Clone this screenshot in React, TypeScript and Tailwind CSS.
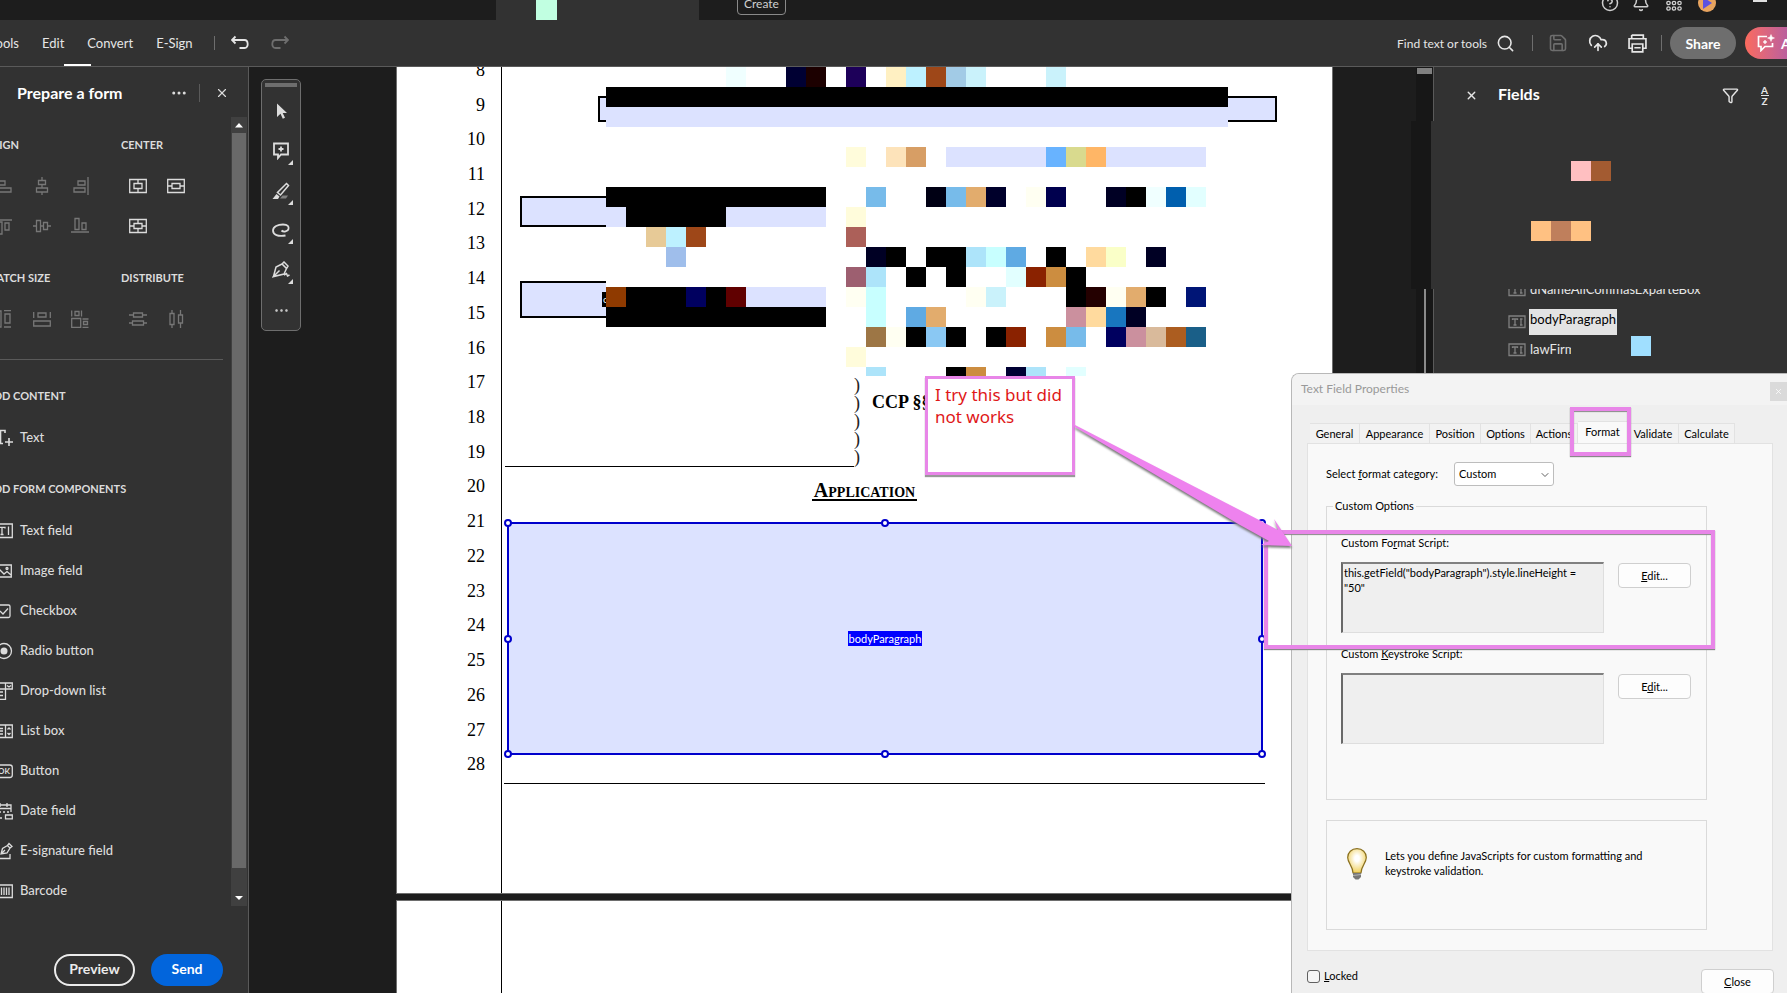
import React from 'react';
import { Bell, CircleHelp, CloudUpload, Save, Search, X, Ellipsis, ChevronDown, Funnel } from 'lucide-react';

type IconProps = {
  children: React.ReactNode;
  className?: string;
};

// 18px outline icon used all over the side panel
const Icon = ({ children, className = '' }: IconProps) => (
  <svg viewBox="0 0 18 18" className={`h-[18px] w-[18px] shrink-0 ${className}`} fill="none" stroke="currentColor" strokeWidth="1.3">
    {children}
  </svg>
);

const alignIcons = [
  { label: 'Align left', icon: <path d="M1 0v18M3 4h7v4H3zM3 11h13v4H3z" /> },
  { label: 'Align center', icon: <path d="M5.5 3.5h7v4h-7zM3.5 11h11v4h-11zM9 0v3.5M9 7.5V11M9 15v3" /> },
  { label: 'Align right', icon: <path d="M17 0v18M7 4h7v4H7zM3 11h11v4H3z" /> },
  { label: 'Align top', icon: <path d="M0 3h17M3 5h4v12H3zM10 6h4v7h-4z" /> },
  { label: 'Align middle', icon: <path d="M3.5 3.5h4v11h-4zM10.5 5.5h4v7h-4zM0 9h3.5M7.5 9h3M14.5 9H18" /> },
  { label: 'Align bottom', icon: <path d="M0 15h18M4 1.500h4v11H4zM11 6h4v6.500h-4z" /> },
];

const centerIcons = [
  { label: 'Center vertically', icon: <path d="M.7 2.500h16.600v13H.7zM5 6.500h8v5H5zM9 2.500v4M9 11.500v4" /> },
  { label: 'Center horizontally', icon: <path d="M.7 2.500h16.600v13H.7zM5 6.500h8v5H5zM.7 9H5M13 9h4.300" /> },
  { label: 'Center both', icon: <path d="M.7 2.500h16.600v13H.7zM5 6.500h8v5H5zM9 2.500v4M9 11.500v4M.7 9H5M13 9h4.300" /> },
];

const sizeIcons = [
  { label: 'Match height', icon: <path d="M1 1h5v16H1zM10 4h5v9h-5zM9 .6h7M9 17h7" /> },
  { label: 'Match width', icon: <path d="M.7 11h16.600v5H.7zM5 3h8v4H5zM.7 2v6M17.300 2v6" /> },
  { label: 'Match both', icon: <path d="M.7 8.500h9v9h-9zM12.500 11.500h4v3h-4zM11.500 9h6M11.500 17.300h6M4 1.500h4v4H4zM.7.500v6M10.500.500v6" /> },
];

const distributeIcons = [
  { label: 'Distribute vertically', icon: <path d="M4.500 3h9v4h-9zM3.500 11h11v4h-11zM0 5h4.500M13.500 5H18M0 13h3.500M14.500 13H18" /> },
  { label: 'Distribute horizontally', icon: <path d="M3 3.500h4v11H3zM11.500 5h4v8h-4zM5 0v3.500M5 14.500V18M13.500 0v5M13.500 13v5" /> },
];

const components = [
  { label: 'Text field', icon: <path d="M.7 2h16.600v13.500H.7zM4 6.500V5.300h6v1.200M7 5.300v7.200M5.500 12.500h3M13.500 4.500v8.500" /> },
  { label: 'Image field', icon: <><path d="M.7 3h15.600v12H.7zM1 12l4-4 4 4 3-2.500 4 3.500" /><circle cx="12" cy="6.500" r="1" /></> },
  { label: 'Checkbox', icon: <><rect x="2" y="3" width="13" height="12.500" rx="1.500" /><path d="M5 9l3 3 5-5.500" /></> },
  { label: 'Radio button', icon: <><circle cx="9" cy="9" r="7.500" /><circle cx="9" cy="9" r="3.500" fill="currentColor" stroke="none" /></> },
  { label: 'Drop-down list', icon: <path d="M.7 1h16.600v6H.7zM10.500 1v6M12 3.500l2 1.500 2-1.500M2 7v10.300h8.500V7M4 10h4M4 13.500h4" /> },
  { label: 'List box', icon: <path d="M.7 3h16.600v12.500H.7zM10.500 3v12.500M3 6.500h5M3 9h5M3 12h5M12.500 7.500L14 6l1.500 1.500M12.500 11l1.500 1.500 1.500-1.500" /> },
  { label: 'Button', icon: <><rect x=".7" y="3" width="16.600" height="12.500" rx="2.500" /><text x="3" y="12.200" fontSize="8" fill="currentColor" stroke="none" className="font-['Lato',sans-serif] font-bold">OK</text></> },
  { label: 'Date field', icon: <path d="M1 3h15v7M1 3v13h6M1 6.500h15M5 1v4M12 1v4M4 10h2M8 10h2M12 10h2M10.500 13h6.800v3.800h-6.800z" /> },
  { label: 'E-signature field', icon: <path d="M6 12l1.500-5.500 5-3 2.500 2.500-3 5L6 12zM12.500 3.500l1.500-2 3 3-2 1.500M6 12l4-4M1 11.500v5h14V12" /> },
  { label: 'Barcode', icon: <><path d="M.7 3h16.600v12.500H.7z" /><path d="M4 5.500v7.500M6.500 5.500v7.500M9 5.500v7.500M11.500 5.500v7.500M14 5.500v7.500" /></> },
];

// [x, width, colour] per 20px strip
type Strip = { y: number; cells: [number, number, string][] };

const strips: Strip[] = [
  { y: 67, cells: [[726, 20, '#f0ffff'], [786, 20, '#000033'], [806, 20, '#1c0000'], [846, 20, '#1d0059'], [886, 20, '#fff0c2'], [906, 20, '#bdf1ff'], [926, 20, '#9e4718'], [946, 20, '#a2cbe6'], [966, 20, '#caf2fb'], [1046, 20, '#caf2fb']] },
  { y: 87, cells: [[606, 622, '#000000']] },
  { y: 107, cells: [[606, 622, '#dce2ff']] },
  { y: 147, cells: [[846, 20, '#fffcdb'], [886, 20, '#fde3ba'], [906, 20, '#d79e65'], [946, 100, '#dce2ff'], [1046, 20, '#68b3ff'], [1066, 20, '#d9da8e'], [1086, 20, '#ffb666'], [1106, 100, '#dce2ff']] },
  { y: 187, cells: [[606, 220, '#000000'], [866, 20, '#77bbea'], [926, 20, '#000014'], [946, 20, '#77bbea'], [966, 20, '#e2ac6d'], [986, 20, '#00002b'], [1026, 20, '#fffff2'], [1046, 20, '#00004e'], [1106, 20, '#000024'], [1126, 20, '#000000'], [1146, 20, '#f0ffff'], [1166, 20, '#005fae'], [1186, 20, '#e2ffff']] },
  { y: 207, cells: [[606, 20, '#dce2ff'], [626, 100, '#000000'], [726, 100, '#dce2ff'], [846, 20, '#fffcdb']] },
  { y: 227, cells: [[646, 20, '#e7ca97'], [666, 20, '#bdf1ff'], [686, 20, '#9e4718'], [846, 20, '#ac6059']] },
  { y: 247, cells: [[666, 20, '#9fbeeb'], [866, 20, '#000024'], [886, 20, '#000000'], [926, 40, '#000000'], [966, 20, '#ade4fa'], [986, 20, '#c8ffff'], [1006, 20, '#5faae3'], [1046, 20, '#000000'], [1086, 20, '#ffda9e'], [1106, 20, '#faffc8'], [1146, 20, '#000024']] },
  { y: 267, cells: [[846, 20, '#9d5f70'], [866, 20, '#ade4fa'], [906, 20, '#000000'], [946, 20, '#000000'], [1006, 20, '#e2ffff'], [1026, 20, '#8a2200'], [1046, 20, '#cc8d40'], [1066, 20, '#000000']] },
  { y: 287, cells: [[606, 20, '#8f3a00'], [626, 60, '#000000'], [686, 20, '#00005f'], [706, 20, '#000000'], [726, 20, '#600000'], [746, 80, '#dce2ff'], [846, 20, '#fffff2'], [866, 20, '#c8ffff'], [966, 20, '#fffff2'], [986, 20, '#caf2fb'], [1066, 20, '#000000'], [1086, 20, '#240000'], [1106, 20, '#fffff2'], [1126, 20, '#e2ac6d'], [1146, 20, '#000000'], [1186, 20, '#001576']] },
  { y: 307, cells: [[606, 220, '#000000'], [866, 20, '#c8ffff'], [906, 20, '#5faae3'], [926, 20, '#e2ac6d'], [1066, 20, '#cb909e'], [1086, 20, '#ffda9e'], [1106, 20, '#1876bf'], [1126, 20, '#000024']] },
  { y: 327, cells: [[866, 20, '#9d7645'], [886, 20, '#fffff2'], [906, 20, '#000000'], [926, 20, '#8ac8f3'], [946, 20, '#000000'], [986, 20, '#000000'], [1006, 20, '#8a2200'], [1046, 20, '#cc8d40'], [1066, 20, '#77bbea'], [1106, 20, '#00005f'], [1126, 20, '#cb909e'], [1146, 20, '#d9ba9b'], [1166, 20, '#ac5d20'], [1186, 20, '#1a5f88']] },
  { y: 347, cells: [[846, 20, '#fffcdb']] },
  { y: 367, cells: [[866, 20, '#ade4fa'], [946, 20, '#000000'], [966, 20, '#cc8d40'], [1006, 20, '#000033'], [1026, 20, '#ade4fa'], [1066, 20, '#e2ffff']] },
];

const lineNumbers = Array.from({ length: 21 }, (_, i) => i + 8);

const handles = [
  '-left-[5px] -top-[5px]', 'left-[372px] -top-[5px]', '-right-[5px] -top-[5px]',
  '-left-[5px] top-[111px]', '-right-[5px] top-[111px]',
  '-left-[5px] -bottom-[5px]', 'left-[372px] -bottom-[5px]', '-right-[5px] -bottom-[5px]',
];

const TitleBar = () => (
  <header className="flex h-5 shrink-0 items-end overflow-hidden bg-[#1d1d1d] text-[#d0d0d0]">
    <div className="ml-[496px] flex h-5 w-[203px] bg-[#323232] pl-10">
      <span className="h-5 w-[21px] bg-[#c1ffe1]" />
    </div>
    <button className="mb-[5px] ml-[38px] h-7 rounded-[4px] border border-[#8a8a8a] px-[6px] pt-[5px] text-[12px] leading-5">Create</button>
    <div className="ml-auto flex items-end gap-4 pr-5">
      <CircleHelp size={18} strokeWidth={2} className="mb-[8px]" />
      <Bell size={18} strokeWidth={2} className="mb-[8px] ml-[-3px]" />
      <svg viewBox="0 0 16 16" className="mb-[9px] h-4 w-4" fill="none" stroke="currentColor" strokeWidth="1.300">
        {[2.5, 8, 13.5].map((y) => [2.5, 8, 13.5].map((x) => <circle key={`${x}-${y}`} cx={x} cy={y} r="1.700" />))}
      </svg>
      <svg viewBox="0 0 18 18" className="mb-[8px] h-[18px] w-[18px]">
        <circle cx="9" cy="9" r="9" fill="#e8a45f" />
        <path d="M5 3l9 6-9 6z" fill="#5b52e0" />
      </svg>
      <span className="mb-[18px] ml-[21px] h-[2px] w-[14px] bg-[#e0e0e0]" />
    </div>
  </header>
);

const Toolbar = () => (
  <div className="flex h-[47px] shrink-0 items-center border-b border-[#5a5a5a] bg-[#323232] text-[13px] text-[#e6e6e6]">
    <nav className="relative flex h-full w-[200px] items-center pt-[2px]">
      <button className="-ml-[13px] w-8 text-right">Tools</button>
      <button className="ml-[23px]">Edit</button>
      <button className="ml-[23px]">Convert</button>
      <button className="ml-[23px]">E-Sign</button>
      <span className="absolute bottom-0 left-16 h-[2px] w-[27px] bg-white" />
    </nav>
    <span className="ml-[14px] h-[14px] w-px bg-[#6e6e6e]" />
    <button aria-label="Undo" className="ml-4">
      <Icon><path d="M4.500 2.500L1 6l3.500 3.500M1 6h12.500c4 0 4.500 8 0 8H8.500" strokeWidth="1.800" /></Icon>
    </button>
    <button aria-label="Redo" className="ml-[22px] text-[#6e6e6e]">
      <Icon><path d="M13.500 2.500L17 6l-3.500 3.500M17 6H4.500c-4 0-4.500 8 0 8h5" strokeWidth="1.800" /></Icon>
    </button>
    <div className="ml-auto flex items-center">
      <span className="pt-px text-[12px]">Find text or tools</span>
      <button aria-label="Search" className="ml-[9px]"><Search size={19} strokeWidth={2} /></button>
      <span className="ml-[17px] h-4 w-px bg-[#6e6e6e]" />
      <button aria-label="Save" className="ml-[15px] text-[#6e6e6e]">
        <Save size={20} strokeWidth={1.900} />
      </button>
      <button aria-label="Upload" className="ml-5"><CloudUpload size={20} strokeWidth={2} /></button>
      <button aria-label="Print" className="ml-5">
        <Icon className="h-[19px] w-[19px]"><path d="M3.500 1h11v3M3.500 4V1M4 13.500H1V4.500h16v9h-3M4 9.500h10v7.500H4zM6 13h6" strokeWidth="1.600" /></Icon>
      </button>
      <span className="ml-[14px] h-4 w-px bg-[#6e6e6e]" />
      <button className="ml-2 h-8 w-[66px] rounded-full bg-[#6e6e6e] text-[14px] font-bold text-white">Share</button>
      <button className="ml-[9px] flex h-8 w-[42px] items-center overflow-hidden rounded-l-full bg-linear-to-r from-[#fb6a5c] to-[#bb5f9c] pl-3 text-[14px] font-bold text-white">
        <Icon className="h-5 w-5">
          <path d="M10 2.500H1.500v10H4v4l4-4h7.500V9" strokeWidth="1.700" />
          <path d="M14 .5l1 2.500 2.500 1L15 5l-1 2.500L13 5l-2.500-1L13 3zM8 6l.7 1.300L10 8l-1.300.7L8 10l-.7-1.300L6 8l1.300-.7z" fill="currentColor" strokeWidth=".5" />
        </Icon>
        <span className="ml-[6px]">A</span>
      </button>
    </div>
  </div>
);

const SectionTitle = ({ children, className = '' }: IconProps) => (
  <h3 className={`text-[11px] leading-4 font-bold whitespace-nowrap text-[#dcdcdc] ${className}`}>{children}</h3>
);

const FormPanel = () => (
  <aside className="flex w-[249px] shrink-0 flex-col overflow-hidden border-r border-[#5a5a5a] bg-[#323232] text-[#dcdcdc]">
    <div className="flex h-[50px] shrink-0 items-center pt-[2px] pl-[17px]">
      <h2 className="text-[16px] leading-5 font-bold text-white">Prepare a form</h2>
      <button aria-label="More" className="ml-auto"><Ellipsis size={18} /></button>
      <span className="ml-[11px] h-[18px] w-px bg-[#5a5a5a]" />
      <button aria-label="Close panel" className="mr-[19px] ml-[15px]"><X size={14} strokeWidth={2} /></button>
    </div>
    <div className="flex min-h-0">
      <div className="w-[231px] shrink-0 overflow-hidden pr-2">
        <div className="grid grid-cols-[121px_1fr] pt-5">
          <SectionTitle className="-ml-[14px]">ALIGN</SectionTitle>
          <SectionTitle>CENTER</SectionTitle>
          <div className="-ml-[5px] mt-6 grid w-[114px] grid-cols-3 gap-y-[22px] text-[#777777]">
            {alignIcons.map((item) => (
              <button key={item.label} aria-label={item.label}><Icon>{item.icon}</Icon></button>
            ))}
          </div>
          <div className="mt-6 ml-2 grid w-[76px] grid-cols-2 gap-y-[22px]">
            {centerIcons.map((item) => (
              <button key={item.label} aria-label={item.label}><Icon>{item.icon}</Icon></button>
            ))}
          </div>
          <SectionTitle className="mt-[35px] -ml-[14px]">MATCH SIZE</SectionTitle>
          <SectionTitle className="mt-[35px]">DISTRIBUTE</SectionTitle>
          <div className="-ml-[5px] mt-6 grid w-[114px] grid-cols-3 text-[#777777]">
            {sizeIcons.map((item) => (
              <button key={item.label} aria-label={item.label}><Icon>{item.icon}</Icon></button>
            ))}
          </div>
          <div className="mt-6 ml-2 grid w-[76px] grid-cols-2 text-[#777777]">
            {distributeIcons.map((item) => (
              <button key={item.label} aria-label={item.label}><Icon>{item.icon}</Icon></button>
            ))}
          </div>
        </div>
        <hr className="mt-[31px] border-[#5a5a5a]" />
        <SectionTitle className="mt-7 -ml-[14px]">ADD CONTENT</SectionTitle>
        <button className="-ml-[5px] mt-[14px] flex h-10 items-center gap-[7px] text-[13px] font-medium">
          <Icon><path d="M1 4V1.500h9V4M5.500 1.500v13M3 14.500h5M14 9v8M10 13h8" strokeWidth="1.600" /></Icon>
          Text
        </button>
        <SectionTitle className="mt-[23px] -ml-[14px]">ADD FORM COMPONENTS</SectionTitle>
        <ul className="-ml-[5px] mt-[14px]">
          {components.map((item) => (
            <li key={item.label}>
              <button className="flex h-10 items-center gap-[7px] text-[13px] font-medium">
                <Icon>{item.icon}</Icon>
                {item.label}
              </button>
            </li>
          ))}
        </ul>
      </div>
      <div className="flex h-[789px] w-4 shrink-0 flex-col items-center bg-[#404040]">
        <svg viewBox="0 0 16 16" className="h-4 w-4" fill="#ffffff"><path d="M4 10.500h8L8 6z" /></svg>
        <span className="h-[735px] w-[14px] bg-[#696969]" />
        <svg viewBox="0 0 16 16" className="mt-auto h-4 w-4" fill="#ffffff"><path d="M4 6h8l-4 4z" /></svg>
      </div>
    </div>
    <div className="mt-auto mb-[7px] flex shrink-0 justify-end gap-4 pr-[25px] text-[14px] leading-5 font-bold">
      <button className="h-8 w-[81px] rounded-full border-2 border-[#ebebeb] pb-[2px] text-[#ebebeb]">Preview</button>
      <button className="h-8 w-[72px] rounded-full bg-[#0265dc] pb-[2px] text-white">Send</button>
    </div>
  </aside>
);

const tools = [
  { label: 'Select', more: false, icon: <path d="M5 1.500v13.500l3.500-3.200 2.300 5 2.200-1-2.300-4.800H15z" fill="currentColor" stroke="none" /> },
  { label: 'Comment', more: true, icon: <path d="M2 1.500h14v11H9L6 16v-3.500H2zM9 4.500v5M6.500 7h5" /> },
  { label: 'Highlight', more: true, icon: <><path d="M14.500 1.500l2 2-8 9.500-3-2.500z" strokeWidth="1.500" /><path d="M4.500 12l3 2.500-1.500 2.500H.5z" fill="currentColor" stroke="none" /><path d="M8 16.500l2.500-3H16l-2 3z" fill="#808080" stroke="none" /></> },
  { label: 'Draw', more: true, icon: <path d="M13.500 14.500C6 16 1 13.500 1 9.500S6 3.500 11 3.500s6 2 5.500 4.500-5 3.500-7 1.500" /> },
  { label: 'Sign', more: true, icon: <path d="M1.500 15.500L4 6l6-3 4.500 4.500L12 13l-10.500 2.500 6-6M10 3l2-2 4 4-1.500 2.500M12 14l2.500-1.500 1 2.500 2-1" strokeWidth="1.500" /> },
];

const ToolPalette = () => (
  <div className="mt-3 ml-3 flex h-[252px] w-10 shrink-0 flex-col items-center rounded-[5px] border border-[#6e6e6e] bg-[#323232] pt-[3px] text-[#dcdcdc]">
    <span className="mb-1 h-1 w-8 bg-[#6e6e6e]" />
    {tools.map((tool) => (
      <button key={tool.label} aria-label={tool.label} className="relative flex h-10 w-full items-center justify-center">
        <Icon className="[stroke-width:1.8]">{tool.icon}</Icon>
        {tool.more && (
          <svg viewBox="0 0 5 5" className="absolute right-[7px] bottom-[6px] h-[5px] w-[5px]" fill="currentColor"><path d="M5 0v5H0z" /></svg>
        )}
      </button>
    ))}
    <button aria-label="More tools" className="flex h-10 items-center"><Ellipsis size={17} strokeWidth={1.500} /></button>
  </div>
);

const DocumentView = () => (
  <main className="flex min-w-0 flex-1 overflow-hidden bg-[#1d1d1d]">
    <ToolPalette />
    <div className="ml-[95px] flex w-[937px] shrink-0 flex-col gap-[6px] font-['Liberation_Serif',serif] text-[18px] text-black">
      <article className="flex h-[827px] shrink-0 overflow-hidden border-x border-b border-[#6e6e6e] bg-white">
        <ol className="w-[105px] shrink-0 border-r border-black pr-4 text-right">
          <div className="-mt-[14px] flex h-[729px] flex-col">
            {lineNumbers.map((n) => (
              <li key={n} className="flex flex-1 items-center justify-end">{n}</li>
            ))}
          </div>
        </ol>
        <div className="flex flex-1 flex-col">
          <div className="relative h-[309px] shrink-0">
            <div className="absolute top-[29px] left-[96px] h-[26px] w-[679px] border-2 border-black bg-[#dce2ff]" />
            <div className="absolute top-[129px] left-[18px] h-[31px] w-[86px] border-2 border-r-0 border-black bg-[#dce2ff]" />
            <div className="absolute top-[214px] left-[18px] h-[37px] w-[86px] border-2 border-r-0 border-black bg-[#dce2ff]">
              <span className="absolute top-[9px] left-[80px] bg-black pl-px font-['Lato',sans-serif] text-[10px] leading-[15px] text-white">c</span>
            </div>
            <svg viewBox="502 67 830 309" className="absolute inset-0 h-[309px] w-[830px]" shapeRendering="crispEdges">
              {strips.map((strip) => strip.cells.map(([x, w, fill]) => (
                <rect key={`${x}-${strip.y}`} x={x} y={strip.y} width={w} height="20" fill={fill} />
              )))}
            </svg>
          </div>
          <div className="flex h-[91px] shrink-0 pl-[3px]">
            <div className="h-[91px] w-[349px] border-b border-black" />
            <div className="w-[18px] text-[18px] leading-[18px] text-[#222222]">
              {[0, 1, 2, 3, 4].map((n) => <div key={n}>)</div>)}
            </div>
            <p className="mt-[13px] font-bold whitespace-nowrap">CCP §§</p>
          </div>
          <h1 className="mt-[14px] ml-[310px] w-[105px] border-b-2 border-black text-center text-[20px] leading-[18px] font-bold [font-variant:small-caps]">Application</h1>
          <div className="relative mt-[21px] ml-[5px] flex h-[233px] w-[756px] shrink-0 items-center justify-center border-2 border-[#0000cc] bg-[#dce2ff]">
            <span className="bg-[#0000ff] px-px font-['Lato',sans-serif] text-[11px] leading-[15px] text-white">bodyParagraph</span>
            {handles.map((pos) => (
              <span key={pos} className={`absolute h-2 w-2 rounded-full border-2 border-[#0000cc] bg-white ${pos}`} />
            ))}
          </div>
          <hr className="mt-7 ml-[2px] w-[761px] border-black" />
        </div>
      </article>
      <article className="flex flex-1 border-x border-t border-[#6e6e6e] bg-white">
        <div className="w-[105px] border-r border-black" />
      </article>
    </div>
    <div className="ml-auto flex w-[23px] shrink-0 flex-col">
      <div className="ml-[5px] h-[54px] border-r border-[#5a5a5a] bg-[#171717] pt-px pl-px">
        <div className="h-[6px] w-[15px] bg-[#808080]" />
      </div>
      <div className="h-[168px] border-r-[3px] border-[#323232] bg-[#171717]" />
      <div className="ml-[5px] flex flex-1 border-r border-[#5a5a5a] bg-[#171717] pl-2">
        <div className="w-[2px] bg-[#8a8a8a]" />
      </div>
    </div>
  </main>
);

const FieldIcon = () => (
  <Icon className="text-[#808080]"><path d="M1 3h16v11.500H1zM4.500 7V6h5v1M7 6v6M5.500 12h3M13 6v6M12 6h2.500M12 12h2.500" /></Icon>
);

const FieldsPanel = () => (
  <aside className="w-[353px] shrink-0 overflow-hidden bg-[#323232] text-[#e6e6e6]">
    <div className="flex h-14 items-center pl-[31px]">
      <button aria-label="Close fields"><X size={13} strokeWidth={2.500} /></button>
      <h2 className="ml-5 pb-[2px] text-[16px] leading-5 font-bold text-white">Fields</h2>
      <button aria-label="Filter" className="mr-5 ml-auto"><Funnel size={17} strokeWidth={2} /></button>
      <button aria-label="Sort" className="mr-[17px] flex w-[11px] flex-col items-center pt-px text-[10px] leading-[10px] font-bold">
        <span className="w-2 border-b border-current">A</span>
        <span>Z</span>
      </button>
    </div>
    <div className="mt-[38px] flex pl-[137px]">
      <span className="h-5 w-5 bg-[#ffbfc1]" />
      <span className="h-5 w-5 bg-[#a35b31]" />
    </div>
    <div className="mt-10 flex pl-[97px]">
      <span className="h-5 w-5 bg-[#ffc182]" />
      <span className="h-5 w-5 bg-[#bf7f5c]" />
      <span className="h-5 w-5 bg-[#ffc182]" />
    </div>
    <ul className="mt-12 pl-[74px] text-[13px]">
      <li className="flex h-4 items-end gap-1 overflow-hidden">
        <div className="flex h-[30px] items-center gap-1"><FieldIcon /><span>dNameAllCommasExparteBox</span></div>
      </li>
      <li className="flex h-[34px] items-center gap-[3px]">
        <FieldIcon />
        <span className="h-[26px] bg-[#e3e3e3] px-px pt-px text-black">bodyParagraph</span>
      </li>
      <li className="flex h-[22px] items-center gap-1">
        <FieldIcon />
        <span className="w-[41px] overflow-hidden">lawFirm</span>
        <span className="mb-[5px] ml-14 h-5 w-5 self-end bg-[#a0dfff]" />
      </li>
    </ul>
  </aside>
);

const tabs = [
  { label: 'General', width: 'w-[50px]' },
  { label: 'Appearance', width: 'w-[70px]' },
  { label: 'Position', width: 'w-[51px]' },
  { label: 'Options', width: 'w-[50px]' },
  { label: 'Actions', width: 'w-[47px]' },
  { label: 'Format', width: 'w-[50px]' },
  { label: 'Validate', width: 'w-[51px]' },
  { label: 'Calculate', width: 'w-[56px]' },
];

const textBox = 'h-[71px] w-[263px] shrink-0 resize-none border-t-2 border-l-2 border-r border-b border-t-[#808080] border-l-[#696969] border-r-[#dedede] border-b-[#dedede] bg-[#efefef] pt-px pr-4 pl-px leading-[15px]';
const dialogButton = 'h-[25px] w-[73px] rounded-[4px] border border-[#cfcfcf] bg-[#fdfdfd] pt-px';

const PropertiesDialog = () => (
  <div role="dialog" aria-label="Text Field Properties" className="absolute top-[373px] right-0 bottom-0 left-[1291px] flex flex-col overflow-hidden rounded-tl-[8px] border-t border-l border-[#b8b8b8] bg-[#efefef] text-[11px] text-black">
    <div className="flex h-[31px] shrink-0 items-center bg-[#f3f3f3] pl-[9px] text-[#999999]">
      <span className="pb-px text-[12px]">Text Field Properties</span>
      <button aria-label="Close dialog" className="mt-[3px] ml-auto flex h-[19px] w-[17px] items-center justify-center bg-[#dadada] text-white"><X size={9} /></button>
    </div>
    <div role="tablist" className="mt-4 flex h-[22px] shrink-0 items-end pl-[18px]">
      {tabs.map((tab) => (
        <button
          key={tab.label}
          role="tab"
          aria-selected={tab.label === 'Format'}
          className={`${tab.width} border-t border-r border-[#e2e2e2] ${tab.label === 'Format' ? 'h-[22px] bg-[#f9f9f9]' : 'h-5 bg-[#f2f2f2] pt-px'}`}
        >
          {tab.label}
        </button>
      ))}
    </div>
    <div className="mr-[14px] ml-[15px] h-[508px] shrink-0 border border-[#e2e2e2] bg-[#f9f9f9] px-[18px] pt-[18px]">
      <div className="flex h-6 items-center">
        <label htmlFor="category" className="w-[128px]">Select <u>f</u>ormat category:</label>
        <div className="relative">
          <select id="category" defaultValue="Custom" className="h-6 w-[100px] appearance-none rounded-[3px] border border-[#bdbdbd] bg-white pl-1">
            <option>Custom</option>
          </select>
          <ChevronDown size={12} strokeWidth={2} className="pointer-events-none absolute top-[7px] right-[3px] text-[#606060]" />
        </div>
      </div>
      <fieldset className="mt-3 h-[302px] w-[381px] border border-[#dadada] px-[14px]">
        <legend className="-ml-[8px] px-[2px] leading-4">Custom Options</legend>
        <label htmlFor="format-script" className="mt-[21px] block leading-4">Custom Fo<u>r</u>mat Script:</label>
        <div className="mt-[11px] flex gap-[14px]">
          <textarea id="format-script" readOnly className={textBox} defaultValue={'this.getField("bodyParagraph").style.lineHeight = "50"'} />
          <button className={`mt-px ${dialogButton}`}><u>E</u>dit...</button>
        </div>
        <label htmlFor="keystroke-script" className="mt-[13px] block leading-4">Custom <u>K</u>eystroke Script:</label>
        <div className="mt-[11px] flex gap-[14px]">
          <textarea id="keystroke-script" readOnly className={textBox} />
          <button className={`mt-px ${dialogButton}`}>E<u>d</u>it...</button>
        </div>
      </fieldset>
      <div className="mt-5 flex h-[110px] w-[381px] border border-[#dadada] pt-[27px] pl-5">
        <svg viewBox="0 0 20 32" className="h-8 w-5 shrink-0">
          <defs>
            <radialGradient id="bulb" cx=".5" cy=".4" r=".6">
              <stop offset="0.200" stopColor="#ffffff" />
              <stop offset="1" stopColor="#f0cf58" />
            </radialGradient>
          </defs>
          <path d="M10 .7C4.500.7.7 4.700.7 9.500c0 5.500 5 8 5.300 15.500h8c.3-7.500 5.300-10 5.300-15.500C19.300 4.700 15.500.7 10 .7z" fill="url(#bulb)" stroke="#8a7020" strokeWidth="1.200" />
          <path d="M6 25h8v4l-2.500 2.500h-3L6 29z" fill="#777777" />
          <path d="M6 27.500l8-1" stroke="#b5b5b5" />
        </svg>
        <p className="ml-[18px] w-[275px] leading-[15px]">Lets you define JavaScripts for custom formatting and keystroke validation.</p>
      </div>
    </div>
    <div className="flex justify-between pt-[18px] pr-[13px] pl-[15px]">
      <label className="flex h-[14px] items-center gap-1">
        <input type="checkbox" className="h-[13px] w-[13px] appearance-none rounded-[3px] border border-[#606060] bg-[#f5f5f5]" />
        <span className="pt-px"><u>L</u>ocked</span>
      </label>
      <button className={dialogButton}><u>C</u>lose</button>
    </div>
  </div>
);

const Annotations = () => (
  <>
    <div className="absolute top-[376px] left-[925px] h-[99px] w-[150px] border-[3px] border-[#e886e8] bg-white py-[5px] pl-[7px] font-['Noto_Sans',sans-serif] text-[17px] leading-[22px] whitespace-nowrap text-[#e01818] shadow-[0_2px_1px_#999999]">
      I try this but did<br />not works
    </div>
    <div className="pointer-events-none absolute top-[407px] left-[1570px] h-[49px] w-[61px] border-4 border-[#e886e8] shadow-[0_1px_1px_#888888,inset_0_1px_1px_#888888]" />
    <div className="pointer-events-none absolute top-[530px] left-[1264px] h-[119px] w-[451px] border-4 border-[#e886e8] shadow-[0_1px_1px_#888888,inset_0_1px_1px_#888888]" />
    <svg viewBox="1070 420 230 134" className="pointer-events-none absolute top-[420px] left-[1070px] h-[134px] w-[230px] drop-shadow-[0_2px_1px_#777777]">
      <path d="M1075 425L1261 521l17 9-4-11 18 27-31-1 8-4-29-16-165-98z" fill="#ee82ee" />
    </svg>
  </>
);

function App() {
  return (
    <div className="relative flex h-screen flex-col overflow-hidden bg-[#1d1d1d] font-['Lato',sans-serif]">
      <TitleBar />
      <Toolbar />
      <div className="flex min-h-0 flex-1">
        <FormPanel />
        <DocumentView />
        <FieldsPanel />
      </div>
      <PropertiesDialog />
      <Annotations />
    </div>
  );
}

export default App;
